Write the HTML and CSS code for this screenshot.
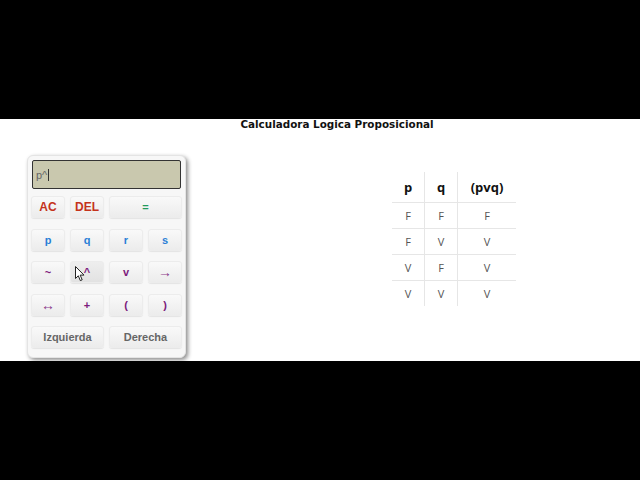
FILE: index.html
```html
<!DOCTYPE html>
<html>
<head>
<meta charset="utf-8">
<link rel="stylesheet" href="styles.css">
</head>
<body>
<div class="screen">
  <h1 class="title">Calculadora Logica Proposicional</h1>
  <div class="content">
    <div class="calc">
      <div class="display"><span class="expr">p^</span><span class="caret"></span></div>
      <div class="keys">
        <button class="key red">AC</button>
        <button class="key red">DEL</button>
        <button class="key green span2">=</button>
        <button class="key blue">p</button>
        <button class="key blue">q</button>
        <button class="key blue">r</button>
        <button class="key blue">s</button>
        <button class="key purple">~</button>
        <button class="key purple hover">^
          <svg class="cursor" width="11" height="16" viewBox="0 0 11 16"><path d="M0.5 0.5 L0.5 12.5 L3.3 9.8 L5.3 14.6 L7.2 13.8 L5.2 9.1 L9 9.1 Z" fill="#fff" stroke="#222" stroke-width="1"/></svg>
        </button>
        <button class="key purple">v</button>
        <button class="key purple arrow">→</button>
        <button class="key purple arrow">↔</button>
        <button class="key purple">+</button>
        <button class="key purple">(</button>
        <button class="key purple">)</button>
        <button class="key grey span2">Izquierda</button>
        <button class="key grey span2">Derecha</button>
      </div>
    </div>
    <table class="truth">
      <thead>
        <tr><th>p</th><th>q</th><th>(pvq)</th></tr>
      </thead>
      <tbody>
        <tr><td>F</td><td>F</td><td>F</td></tr>
        <tr><td>F</td><td>V</td><td>V</td></tr>
        <tr><td>V</td><td>F</td><td>V</td></tr>
        <tr><td>V</td><td>V</td><td>V</td></tr>
      </tbody>
    </table>
  </div>
</div>
</body>
</html>
```
FILE: styles.css
```css
html, body {
  margin: 0;
  padding: 0;
  background: #000;
}
.screen {
  margin-top: 119px;
  height: 242px;
  background: #fff;
  overflow: hidden;
}
.title {
  margin: 0;
  padding: 0 0 0 34px;
  text-align: center;
  font-family: "DejaVu Sans", Verdana, sans-serif;
  font-weight: bold;
  font-size: 10.4px;
  line-height: 10px;
  color: #111;
}
.content {
  display: flex;
  align-items: flex-start;
  padding: 26px 0 0 27px;
}
.calc {
  width: 159px;
  box-sizing: border-box;
  padding: 4px 4px 9px 3px;
  background: #f7f7f7;
  border: 1px solid #e4e4e4;
  border-radius: 6px;
  box-shadow: 2px 2px 4px rgba(0,0,0,0.45);
}
.display {
  height: 29px;
  box-sizing: border-box;
  margin: 0 0 7px 1px;
  background: #c9c8ae;
  border: 1px solid #333;
  border-radius: 2px;
  display: flex;
  align-items: center;
  padding-left: 3px;
  font-family: "Liberation Sans", Arial, sans-serif;
  font-size: 11px;
  color: #666;
}
.caret {
  display: inline-block;
  width: 1px;
  height: 12px;
  background: #333;
  margin-left: 1px;
}
.keys {
  display: grid;
  grid-template-columns: repeat(4, 34px);
  grid-auto-rows: 22px;
  column-gap: 5px;
  row-gap: 10.5px;
}
.key {
  position: relative;
  margin: 0;
  padding: 0;
  border: 1px solid #ececec;
  border-radius: 3px;
  background: linear-gradient(#f9f9f9, #ececec);
  box-shadow: 0 1px 1px rgba(0,0,0,0.08);
  font-family: "Liberation Sans", Arial, sans-serif;
  font-weight: bold;
  font-size: 11px;
}
.span2 { grid-column: span 2; }
.red { color: #c4321b; font-size: 12px; }
.green { color: #239a5c; }
.blue { color: #2b7fd6; }
.purple { color: #7c1b7c; }
.grey { color: #666; }
.arrow {
  font-family: "Liberation Sans", sans-serif;
  font-weight: normal;
  font-size: 14px;
  color: #8a3a8a;
}
.hover { background: linear-gradient(#eeeeee, #e2e2e2); }
.cursor {
  position: absolute;
  left: 4px;
  top: 4px;
}
.truth {
  margin: 17px 0 0 206px;
  border-collapse: collapse;
  font-family: "Open Sans", sans-serif;
}
.truth th, .truth td {
  padding: 0;
  text-align: center;
  border-left: 1px solid #e6e6e6;
}
.truth th:first-child, .truth td:first-child { border-left: none; }
.truth th {
  height: 30px;
  font-weight: bold;
  font-size: 13px;
  color: #111;
  border-bottom: 1px solid #e6e6e6;
}
.truth th:nth-child(1) { width: 32px; }
.truth th:nth-child(2) { width: 32px; }
.truth th:nth-child(3) { width: 58px; }
.truth td {
  height: 25px;
  font-size: 11px;
  color: #555;
  border-bottom: 1px solid #e6e6e6;
}
.truth tbody tr:last-child td { border-bottom: none; }
```
